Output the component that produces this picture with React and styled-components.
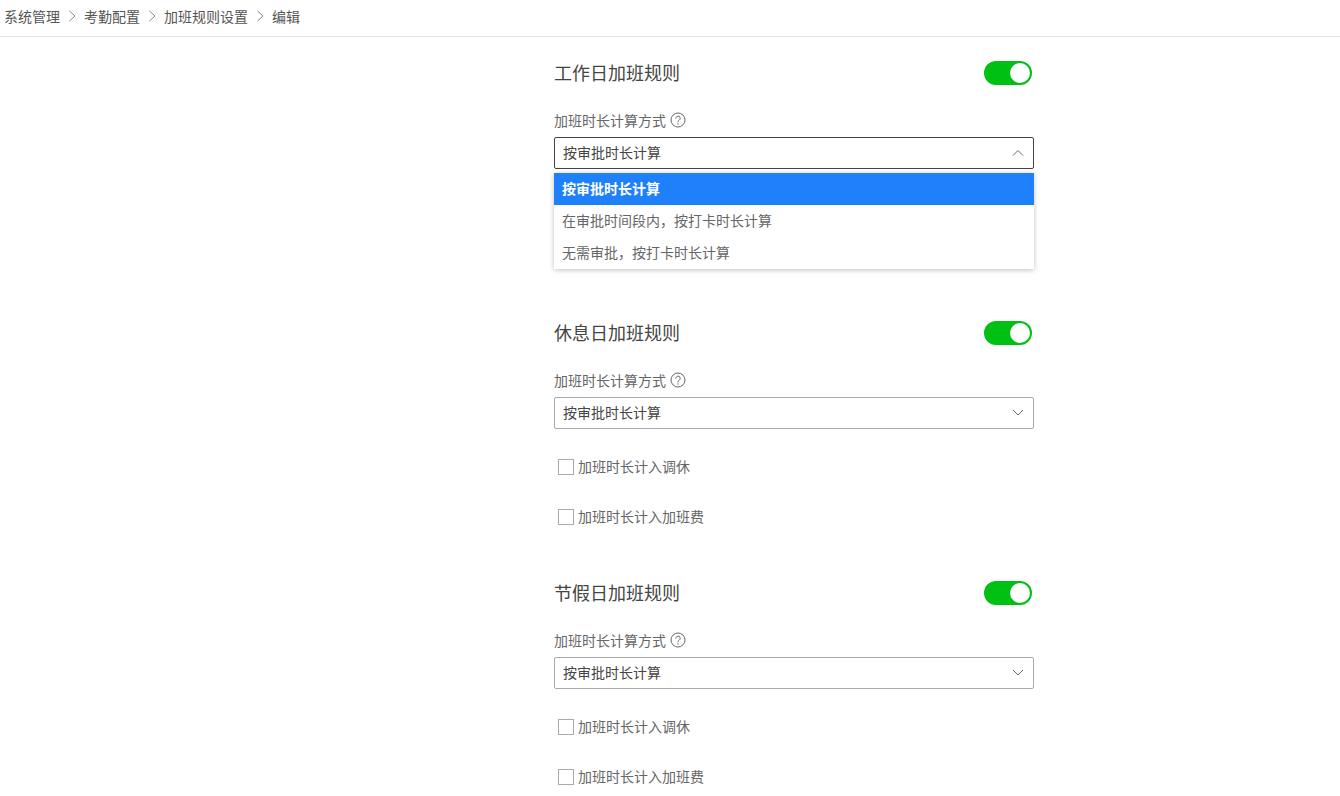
import React from "react";
import styled, { createGlobalStyle } from "styled-components";

const Global = createGlobalStyle`
  html, body { margin: 0; padding: 0; background: #fff; overflow: hidden; height: 100%; }
  body { font-family: "Noto Sans CJK SC", "Liberation Sans", sans-serif; color: #333; }
  #root { height: 796px; overflow: hidden; }
  * { box-sizing: border-box; }
`;

const Breadcrumb = styled.nav`
  height: 37px;
  border-bottom: 1px solid #e4e4e4;
  padding: 0 0 5px 4px;
  display: flex;
  align-items: center;
  font-size: 14px;
  line-height: 20px;
  color: #555;
`;
const Crumb = styled.span`
  white-space: nowrap;
`;
const CrumbSep = styled.svg`
  width: 8px;
  height: 12px;
  margin: 0 8px;
  flex: none;
`;
const Main = styled.main`
  width: 480px;
  margin-left: 554px;
  padding-top: 24px;
`;
const Section = styled.section`
  position: relative;
  height: 260px;
`;
const TitleRow = styled.div`
  height: 24px;
  display: flex;
  align-items: center;
  justify-content: space-between;
  padding-right: 2px;
`;
const Title = styled.h2`
  margin: -2px 0 0;
  font-size: 18px;
  font-weight: 400;
  line-height: 24px;
  color: #444;
`;
const Switch = styled.div`
  width: 48px;
  height: 24px;
  border-radius: 12px;
  background: #00c013;
  position: relative;
`;
const Knob = styled.span`
  position: absolute;
  top: 2px;
  right: 2px;
  width: 20px;
  height: 20px;
  border-radius: 50%;
  background: #fff;
`;
const LabelRow = styled.div`
  margin-top: 24px;
  height: 22px;
  display: flex;
  align-items: center;
  gap: 4px;
  font-size: 14px;
  color: #666;
`;
const HelpIcon = styled.svg`
  width: 16px;
  height: 16px;
  flex: none;
`;
const Select = styled.div`
  margin-top: 6px;
  height: 32px;
  border: 1px solid ${(p) => (p.$open ? "#444" : "#aaa")};
  border-radius: 2px;
  padding: 0 8px 2px;
  display: flex;
  align-items: center;
  justify-content: space-between;
  font-size: 14px;
  color: #444;
`;
const Chevron = styled.svg`
  width: 14px;
  height: 8px;
  flex: none;
`;
const Dropdown = styled.ul`
  position: absolute;
  left: 0;
  top: 112px;
  width: 480px;
  margin: 0;
  padding: 0;
  list-style: none;
  background: #fff;
  box-shadow: 0 1px 5px rgba(0, 0, 0, 0.25);
  z-index: 2;
`;
const Option = styled.li`
  height: 32px;
  line-height: 30px;
  padding-left: 8px;
  font-size: 14px;
  font-weight: ${(p) => (p.$active ? 700 : 400)};
  background: ${(p) => (p.$active ? "#1f80fb" : "#fff")};
  color: ${(p) => (p.$active ? "#fff" : "#666")};
`;
const CheckRow = styled.label`
  height: 20px;
  margin-top: ${(p) => p.$gap}px;
  padding-left: 4px;
  display: flex;
  align-items: center;
  gap: 4px;
  font-size: 14px;
  color: #666;
`;
const CheckText = styled.span`
  line-height: 18px;
  margin-bottom: 2px;
`;
const Box = styled.span`
  width: 16px;
  height: 16px;
  border: 1px solid #aaa;
  flex: none;
`;

const Section1Options = [
  "按审批时长计算",
  "在审批时间段内\uFF0C按打卡时长计算",
  "无需审批\uFF0C按打卡时长计算",
];

function Rule({ title, open }) {
  return (
    <Section>
      <TitleRow>
        <Title>{title}</Title>
        <Switch><Knob /></Switch>
      </TitleRow>
      <LabelRow>
        加班时长计算方式
        <HelpIcon viewBox="0 0 16 16" fill="none" stroke="#666">
          <circle cx="8" cy="8" r="7" />
          <path d="M5.800 6.200a2.200 2.200 0 1 1 3.400 1.900c-.8.500-1.200.9-1.200 1.800" strokeLinecap="round" />
          <circle cx="8" cy="12" r=".7" fill="#666" stroke="none" />
        </HelpIcon>
      </LabelRow>
      <Select $open={open}>
        按审批时长计算
        <Chevron viewBox="0 0 14 8" fill="none" stroke="#666" strokeWidth="1">
          <path d={open ? "M2 7.500 7 2.500 12 7.500" : "M2 2 7 7 12 2"} />
        </Chevron>
      </Select>
      <CheckRow $gap={28}><Box /><CheckText>加班时长计入调休</CheckText></CheckRow>
      <CheckRow $gap={30}><Box /><CheckText>加班时长计入加班费</CheckText></CheckRow>
      {open && (
        <Dropdown>
          {Section1Options.map((o, i) => (
            <Option key={o} $active={i === 0}>{o}</Option>
          ))}
        </Dropdown>
      )}
    </Section>
  );
}

const crumbs = ["系统管理", "考勤配置", "加班规则设置", "编辑"];

export default function App() {
  return (
    <>
      <Global />
      <Breadcrumb>
        {crumbs.map((c, i) => (
          <React.Fragment key={c}>
            {i > 0 && (
              <CrumbSep viewBox="0 0 8 12" fill="none" stroke="#888">
                <path d="M1.500 1 7 6 1.500 11" />
              </CrumbSep>
            )}
            <Crumb>{c}</Crumb>
          </React.Fragment>
        ))}
      </Breadcrumb>
      <Main>
        <Rule title="工作日加班规则" open />
        <Rule title="休息日加班规则" />
        <Rule title="节假日加班规则" />
      </Main>
    </>
  );
}
